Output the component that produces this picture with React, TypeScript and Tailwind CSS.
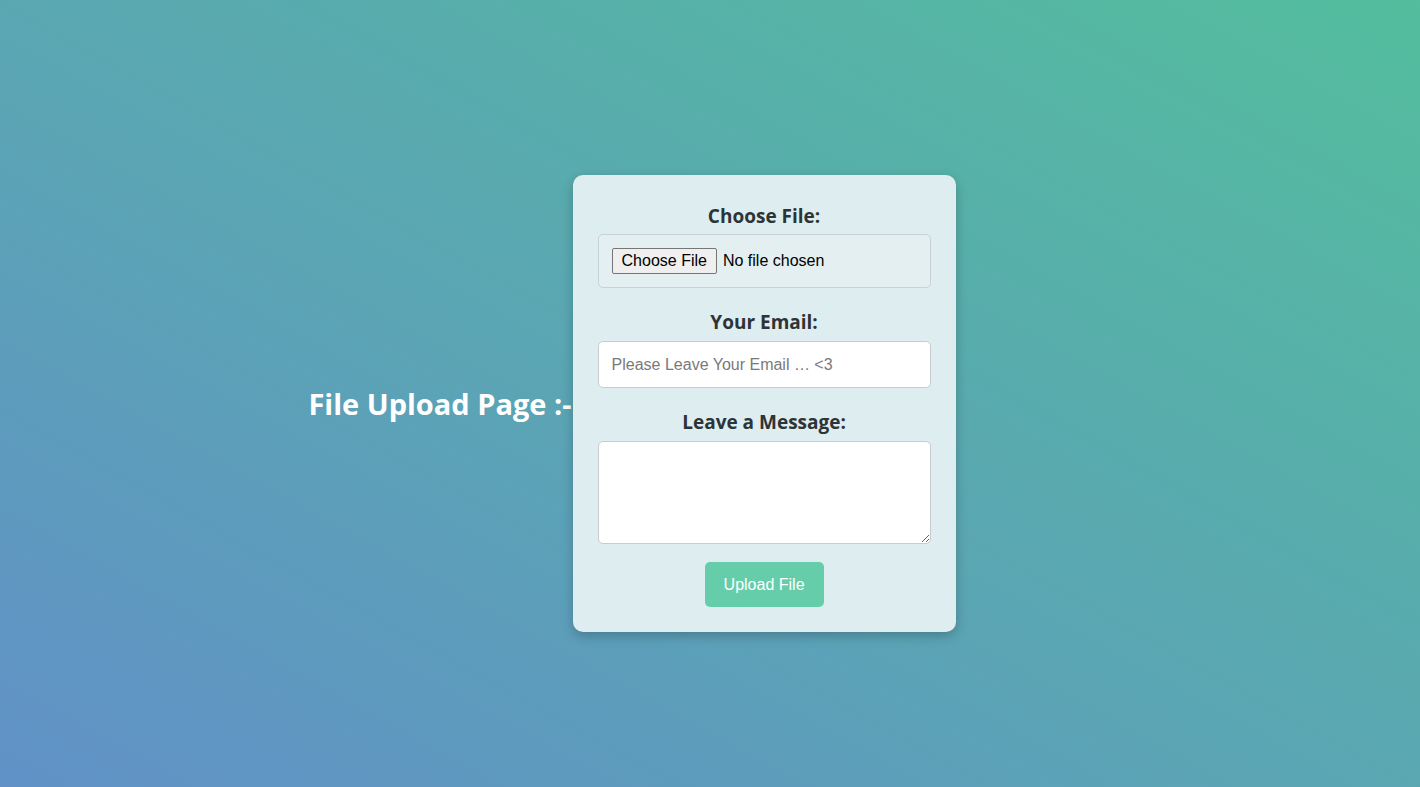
export default function App() {
  return (
    <div className="flex min-h-[787px] w-full items-center justify-center bg-linear-to-tr/srgb from-[#6191c7] to-[#53bd9d] pr-[156px] pt-[20px] font-['Open_Sans','Noto_Sans',sans-serif]">
      <h1 className="text-[29px] font-bold leading-none text-white">File Upload Page :-</h1>

      <form className="ml-px w-[383px] rounded-[10px] bg-[#deedef] px-[25px] pt-[28px] pb-[25px] shadow-[0_4px_12px_rgba(0,0,0,0.22)]">
        {/* file */}
        <label className="mb-[5px] block h-[26px] text-center text-[19px] font-bold leading-[26px] text-[#2d3436]">
          Choose File:
        </label>
        <div className="flex h-[54px] items-center rounded-[5px] border border-[#c8d2d4] bg-[#e3eff1] px-[13px]">
          <input
            type="file"
            className="font-['Liberation_Sans',Arial,sans-serif] text-[16px] text-black file:mr-[6px] file:h-[26px] file:rounded-[2px] file:border file:border-[#767676] file:bg-[#efefef] file:px-[9px] file:text-black"
          />
        </div>

        {/* email */}
        <label className="mt-[21px] mb-[6px] block h-[26px] text-center text-[19px] font-bold leading-[26px] text-[#2d3436]">
          Your Email:
        </label>
        <input
          type="email"
          placeholder="Please Leave Your Email … <3"
          className="block h-[47px] w-full rounded-[5px] border border-[#c8cccd] bg-white px-[13px] font-['Liberation_Sans',Arial,sans-serif] text-[16px] text-black placeholder:text-[#7a7a7a]"
        />

        {/* message */}
        <label className="mt-[21px] mb-[6px] block h-[26px] text-center text-[19px] font-bold leading-[26px] text-[#2d3436]">
          Leave a Message:
        </label>
        <textarea className="block h-[103px] w-full resize rounded-[5px] border border-[#c8cccd] bg-white p-[13px] font-['Liberation_Sans',Arial,sans-serif] text-[16px]" />

        <div className="mt-[18px] flex justify-center">
          <button
            type="button"
            className="h-[45px] rounded-[5px] bg-[#66cdaa] px-[19px] font-['Liberation_Sans',Arial,sans-serif] text-[16px] text-white"
          >
            Upload File
          </button>
        </div>
      </form>
    </div>
  );
}
